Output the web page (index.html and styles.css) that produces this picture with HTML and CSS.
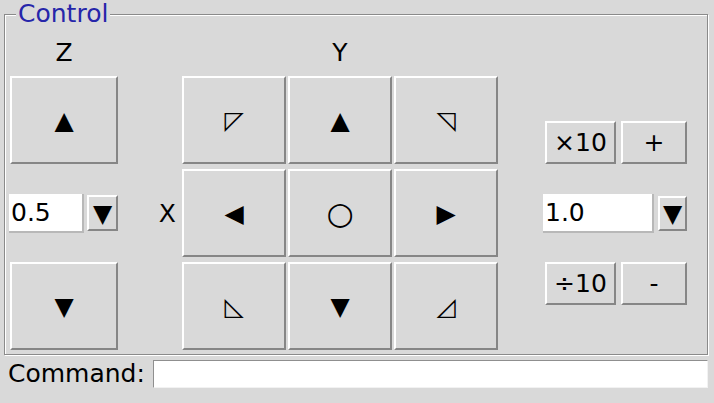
FILE: index.html
```html
<!DOCTYPE html>
<html>
<head>
<meta charset="utf-8">
<link rel="stylesheet" href="styles.css">
</head>
<body>
<div class="frame">
  <div class="title">Control</div>
  <div class="grid">
    <div class="lbl zl">Z</div>
    <div class="lbl yl">Y</div>

    <button class="btn zup">▲</button>
    <div class="zmid">
      <div class="entry e05">0.5</div>
      <button class="btn dd dd1">▼</button>
    </div>
    <button class="btn zdn">▼</button>

    <div class="xl">X</div>

    <button class="btn g c1 r1 thin">◸</button>
    <button class="btn g c2 r1">▲</button>
    <button class="btn g c3 r1 thin">◹</button>
    <button class="btn g c1 r2">◀</button>
    <button class="btn g c2 r2 circ">○</button>
    <button class="btn g c3 r2">▶</button>
    <button class="btn g c1 r3 thin">◺</button>
    <button class="btn g c2 r3">▼</button>
    <button class="btn g c3 r3 thin">◿</button>

    <div class="rrow rtop">
      <button class="btn small wide">×10</button>
      <button class="btn small narrow">+</button>
    </div>
    <div class="rmid">
      <div class="entry e10">1.0</div>
      <button class="btn dd dd2">▼</button>
    </div>
    <div class="rrow rbot">
      <button class="btn small wide">÷10</button>
      <button class="btn small narrow">-</button>
    </div>
  </div>
</div>
<div class="cmd">
  <div class="cmdlabel">Command:</div>
  <div class="cmdentry"></div>
</div>
</body>
</html>
```
FILE: styles.css
```css
html, body {
  margin: 0;
  padding: 0;
  background: #d9d9d9;
}
body {
  width: 714px;
  height: 403px;
  overflow: hidden;
  font-family: "DejaVu Sans", sans-serif;
  font-size: 25px;
  color: #000;
  padding-top: 14px;
  box-sizing: border-box;
}
.frame {
  position: relative;
  margin: 0 6px 0 4px;
  border: 1px solid #8a8a8a;
  box-shadow: inset 1px 1px 0 #fff, 1px 1px 0 #fff;
  padding: 23px 0 4px 5px;
}
.title {
  position: absolute;
  left: 11px;
  top: -16px;
  padding: 0 2px;
  background: #d9d9d9;
  color: #2626aa;
  line-height: 29px;
}
.grid {
  display: grid;
  grid-template-columns: 108px 60px 104px 104px 104px 41px 144px;
  grid-template-rows: 33px 88px 88px 88px;
  column-gap: 2px;
  row-gap: 5px;
}
.lbl {
  line-height: 29px;
  text-align: center;
}
.zl { grid-column: 1; grid-row: 1; }
.yl { grid-column: 3 / 6; grid-row: 1; }

.btn {
  box-sizing: border-box;
  margin: 0;
  padding: 0;
  background: #d9d9d9;
  border: 2px solid;
  border-color: #ffffff #868686 #868686 #ffffff;
  font-family: "DejaVu Sans", sans-serif;
  font-size: 25px;
  color: #000;
  display: flex;
  align-items: center;
  justify-content: center;
  line-height: 1;
}
.zup { grid-column: 1; grid-row: 2; }
.zdn { grid-column: 1; grid-row: 4; }
.zmid {
  grid-column: 1;
  grid-row: 3;
  align-self: center;
  display: flex;
  align-items: center;
  gap: 3px;
  margin-left: -1px;
}
.entry {
  box-sizing: border-box;
  height: 39px;
  background: #fff;
  border-right: 2px solid #b8b8b8;
  border-bottom: 2px solid #b8b8b8;
  padding-left: 2px;
  line-height: 37px;
}
.e05 { width: 75px; }
.e10 { width: 111px; }
.dd { height: 36px; }
.dd1 { width: 31px; }
.dd2 { width: 29px; height: 35px; }

.xl {
  grid-column: 2;
  grid-row: 3;
  align-self: center;
  text-align: right;
  padding-right: 4px;
  line-height: 29px;
}
.c1 { grid-column: 3; }
.c2 { grid-column: 4; }
.c3 { grid-column: 5; }
.r1 { grid-row: 2; }
.r2 { grid-row: 3; }
.r3 { grid-row: 4; }
.thin { font-size: 25px; }
.circ { font-size: 31px; }

.rrow {
  grid-column: 7;
  display: flex;
  gap: 5px;
  margin-left: 2px;
}
.rtop { grid-row: 2; align-self: end; }
.rbot { grid-row: 4; align-self: start; }
.small { height: 43px; }
.wide { width: 71px; }
.narrow { width: 66px; }
.rmid {
  grid-column: 7;
  grid-row: 3;
  align-self: center;
  display: flex;
  align-items: center;
  gap: 4px;
}

.cmd {
  display: flex;
  align-items: center;
  height: 28px;
  margin: 5px 6px 0 8px;
}
.cmdlabel {
  flex: 0 0 145px;
  line-height: 28px;
}
.cmdentry {
  flex: 1;
  box-sizing: border-box;
  height: 28px;
  background: #fff;
  border: 1px solid;
  border-color: #8f8f8f #f2f2f2 #f2f2f2 #8f8f8f;
}
```
